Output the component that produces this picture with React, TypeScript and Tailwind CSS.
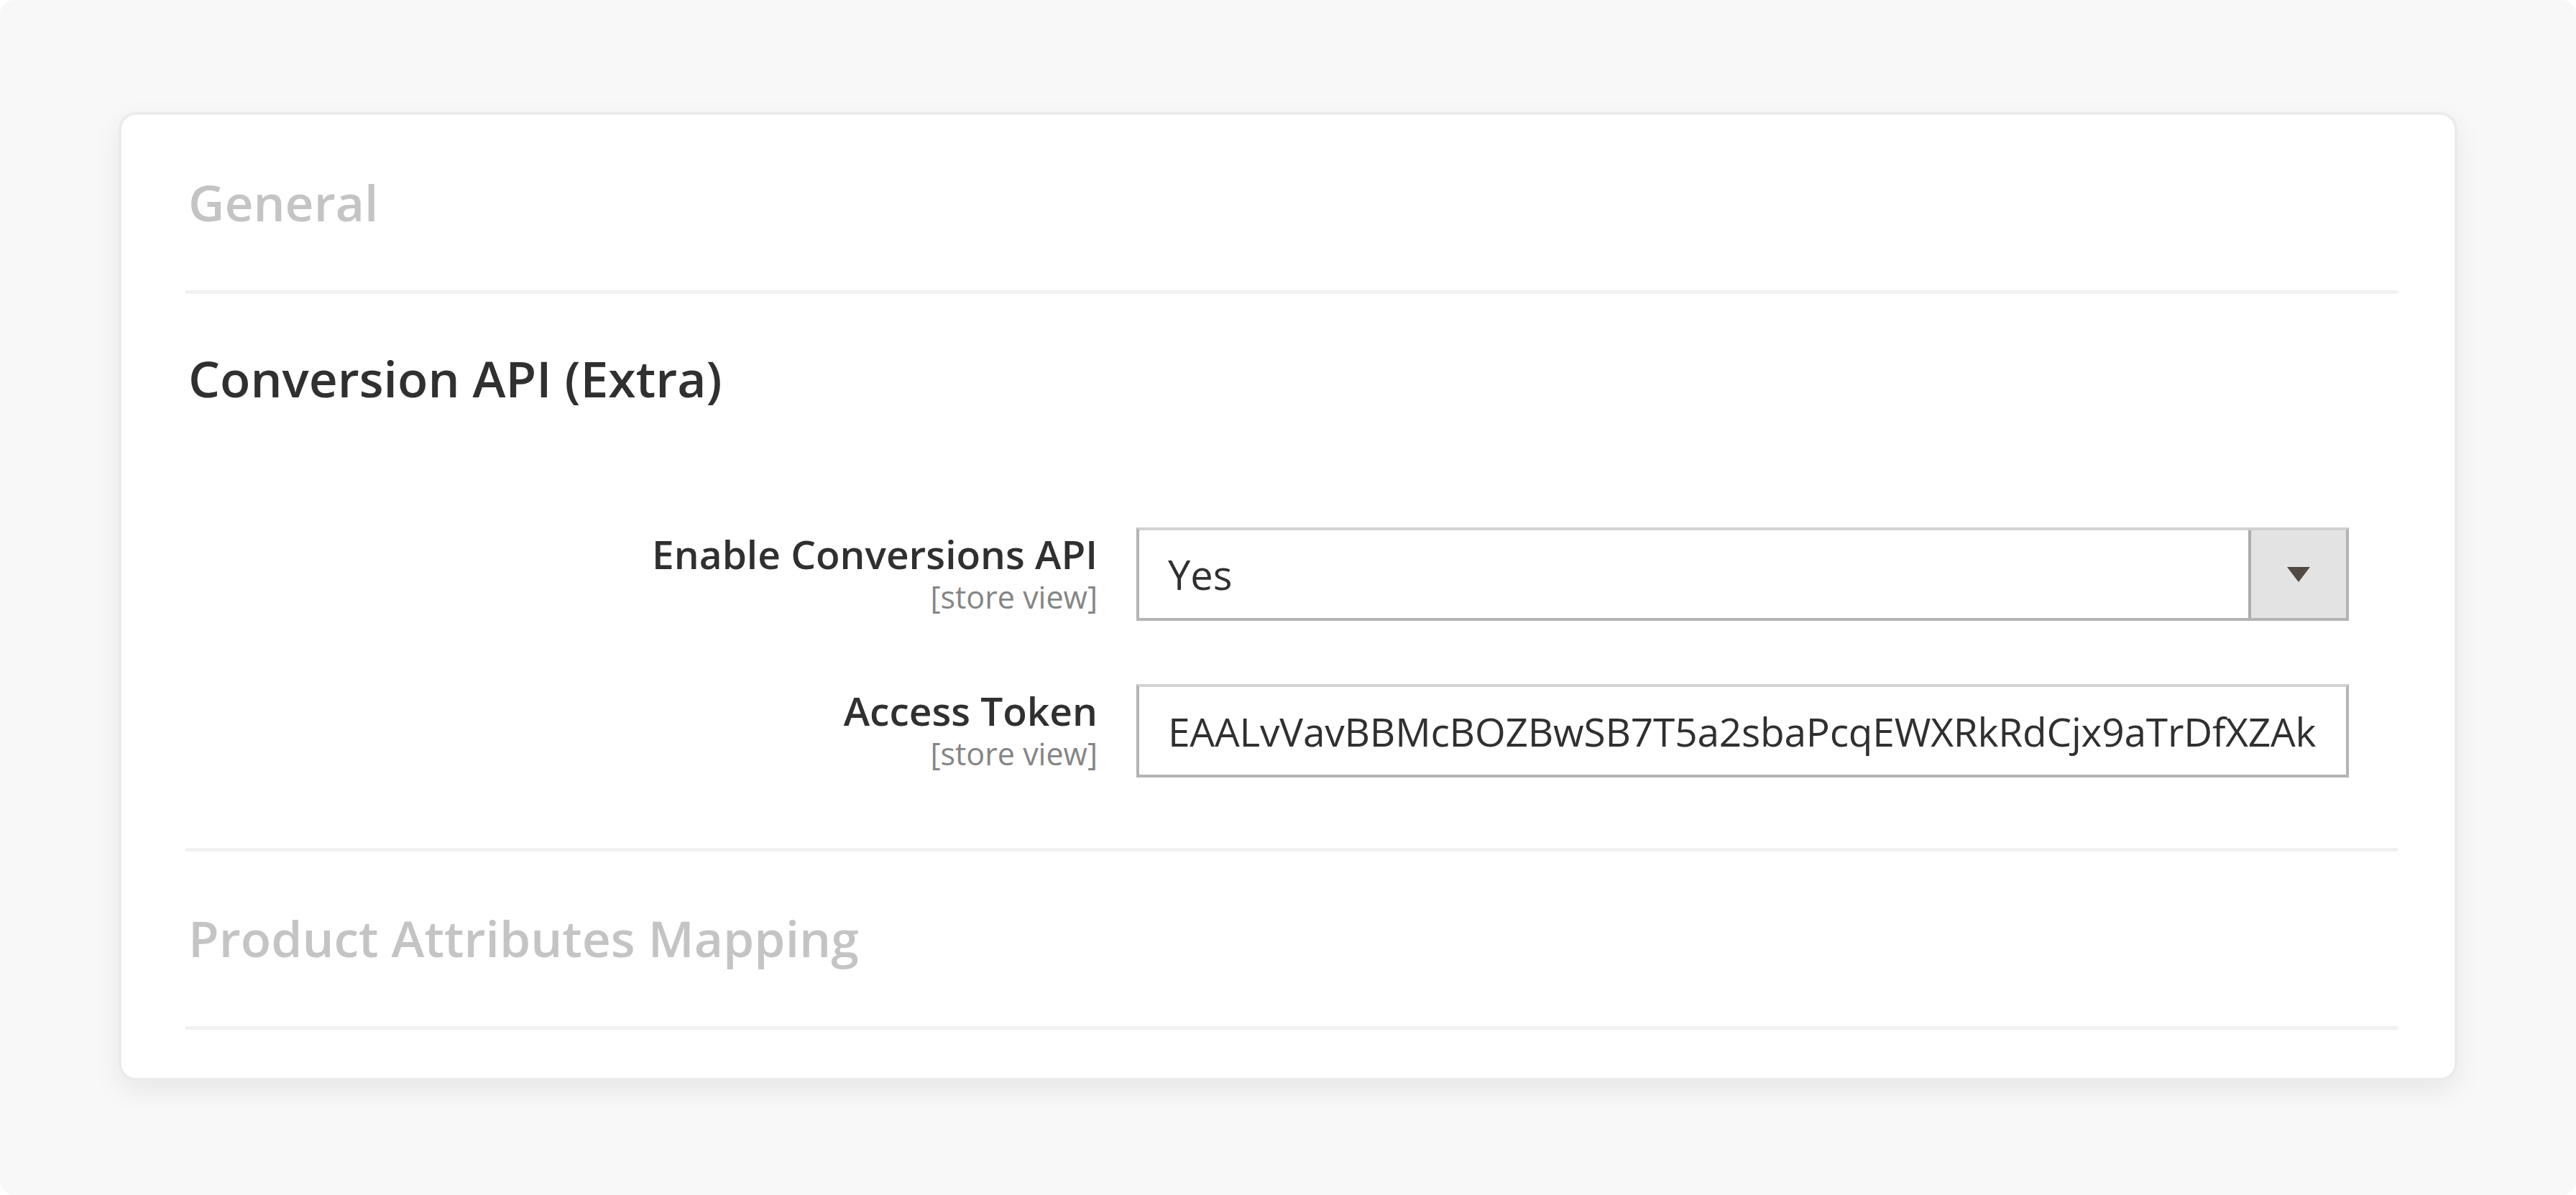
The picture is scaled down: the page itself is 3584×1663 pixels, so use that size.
import React from "react";

const TOKEN = "EAALvVavBBMcBOZBwSB7T5a2sbaPcqEWXRkRdCjx9aTrDfXZAk";

function FieldRow({
  label,
  children,
  className = "",
}: {
  label: string;
  children: React.ReactNode;
  className?: string;
}) {
  return (
    <div className={`flex items-start gap-[54px] ${className}`}>
      <div className="w-[1269px] shrink-0 pt-[9px] text-right">
        <div className="text-[55px] leading-none font-semibold text-[#303030]">
          {label}
        </div>
        <div className="mt-[11px] text-[43px] leading-none text-[#858585]">
          [store view]
        </div>
      </div>
      <div className="w-[1687px] shrink-0">{children}</div>
    </div>
  );
}

export default function App() {
  return (
    <div className="w-[3584px] h-[1663px] bg-white font-['Open_Sans',sans-serif]">
      <div className="w-full h-full rounded-[20px] bg-[#f8f8f8] pt-[156px] pl-[165px]">
        <div className="w-[3254px] h-[1348px] rounded-[24px] border-4 border-[#ebebeb] bg-white pl-[89px] pr-[79px] pt-[87px] shadow-[0_14px_40px_rgba(0,0,0,0.07)]">
          <div className="h-[69px] pl-[4px] text-[69.5px] leading-none font-semibold text-[#c4c4c4]">
            General
          </div>
          <div className="mt-[88px] h-[5px] bg-[#f1f1f1]" />

          <div className="mt-[83px] h-[69px] pl-[4px] text-[69.5px] leading-none font-semibold text-[#303030]">
            Conversion API (Extra)
          </div>

          <FieldRow label="Enable Conversions API" className="mt-[173px]">
            <div className="flex h-[130px] border-4 border-[#b4b4b4] border-t-[#d2d2d2] bg-white">
              <div className="flex flex-1 items-center pl-[40px] text-[56px] leading-none text-[#303030]">
                Yes
              </div>
              <div className="flex w-[136px] items-center justify-center border-l-4 border-[#adadad] bg-[#e3e3e3]">
                <svg width="32" height="21" viewBox="0 0 32 21">
                  <polygon points="0,0 32,0 16,21" fill="#514943" />
                </svg>
              </div>
            </div>
          </FieldRow>

          <FieldRow label="Access Token" className="mt-[88px]">
            <div className="flex h-[130px] items-center overflow-hidden border-4 border-[#b4b4b4] border-t-[#d2d2d2] bg-white pl-[40px] pr-[20px]">
              <div className="whitespace-nowrap text-[55px] leading-none tracking-[-0.2px] text-[#303030]">
                {TOKEN}
              </div>
            </div>
          </FieldRow>

          <div className="mt-[98px] h-[5px] bg-[#f1f1f1]" />

          <div className="mt-[86px] h-[69px] pl-[4px] text-[69.5px] leading-none font-semibold text-[#c4c4c4]">
            Product Attributes Mapping
          </div>
          <div className="mt-[88px] h-[5px] bg-[#f1f1f1]" />
        </div>
      </div>
    </div>
  );
}
